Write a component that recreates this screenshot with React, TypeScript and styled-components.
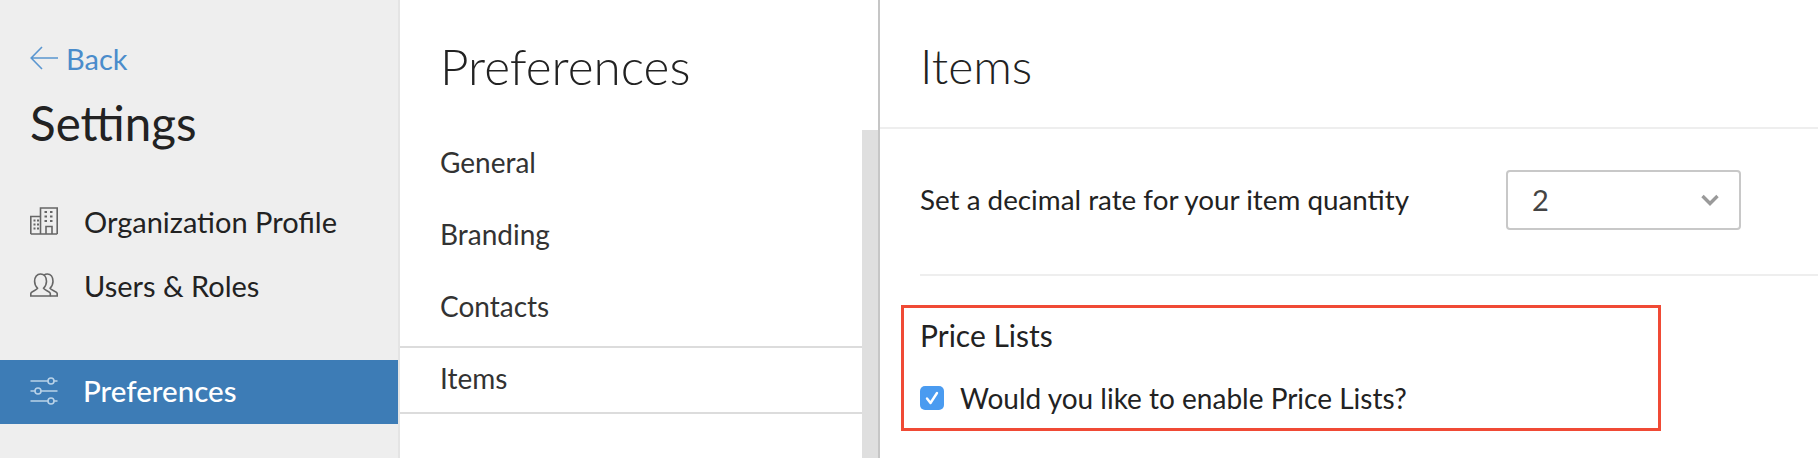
import React from 'react'
import styled, { createGlobalStyle } from 'styled-components'

const GlobalStyle = createGlobalStyle`
  html, body {
    margin: 0;
    padding: 0;
    background: #fff;
    overflow: hidden;
  }
  * {
    box-sizing: border-box;
  }
`

const Page = styled.div`
  display: flex;
  width: 1818px;
  height: 458px;
  overflow: hidden;
  font-family: Lato, 'Liberation Sans', sans-serif;
  color: #222;
`

const Sidebar = styled.aside`
  width: 400px;
  flex: none;
  background: #eeeeee;
  border-right: 2px solid #e4e4e4;
  padding-top: 40px;
`

const BackLink = styled.a`
  display: flex;
  align-items: center;
  gap: 8px;
  height: 36px;
  padding-left: 30px;
  font-size: 29px;
  color: #4a8ccb;
`

const SettingsTitle = styled.h1`
  margin: 17px 0 37px 30px;
  height: 60px;
  line-height: 60px;
  font-size: 47.5px;
  font-weight: 400;
  color: #222;
`

const SideItem = styled.div<{ $active?: boolean }>`
  display: flex;
  align-items: center;
  gap: ${(p) => (p.$active ? 25 : 26)}px;
  height: 64px;
  padding: 0 0 ${(p) => (p.$active ? 3 : 2)}px 30px;
  font-size: ${(p) => (p.$active ? 29.5 : 29)}px;
  color: ${(p) => (p.$active ? '#fff' : '#222')};
  background: ${(p) => (p.$active ? '#3d7cb6' : 'transparent')};
  font-weight: ${(p) => (p.$active ? 500 : 400)};
`

const SideGap = styled.div`
  height: 42px;
`

const Middle = styled.section`
  width: 480px;
  flex: none;
  display: flex;
  flex-direction: column;
  border-right: 2px solid #c6c6c6;
`

const MiddleHeader = styled.div`
  height: 130px;
  padding: 36px 0 0 40px;
`

const PanelTitle = styled.h2`
  margin: 0;
  height: 60px;
  line-height: 60px;
  font-size: 49.5px;
  font-weight: 300;
  color: #222;
`

const MiddleBody = styled.div`
  flex: 1;
  display: flex;
`

const PrefList = styled.div`
  flex: 1;
`

const PrefItem = styled.div<{ $active?: boolean }>`
  height: ${(p) => (p.$active ? 68 : 72)}px;
  display: flex;
  align-items: center;
  padding: 0 0 ${(p) => (p.$active ? 5 : 9)}px 40px;
  font-size: 28px;
  color: #333;
  border-top: ${(p) => (p.$active ? '2px solid #dcdcdc' : 'none')};
  border-bottom: ${(p) => (p.$active ? '2px solid #dcdcdc' : 'none')};
`

const ScrollTrack = styled.div`
  width: 16px;
  flex: none;
  background: #dfdfdf;
`

const Content = styled.main`
  flex: 1;
  min-width: 0;
`

const ContentHeader = styled.div`
  height: 129px;
  padding: 36px 0 0 40px;
  border-bottom: 2px solid #eeeeee;
`

const ContentTitle = styled.h2`
  margin: 0;
  height: 60px;
  line-height: 60px;
  font-size: 48px;
  font-weight: 300;
  color: #222;
`

const SettingRow = styled.div`
  display: flex;
  align-items: center;
  margin-left: 40px;
  height: 147px;
  padding-bottom: 4px;
  border-bottom: 2px solid #eeeeee;
`

const RowLabel = styled.span`
  width: 586px;
  font-size: 27.8px;
  color: #222;
`

const SelectBox = styled.div`
  width: 235px;
  height: 60px;
  display: flex;
  align-items: center;
  justify-content: space-between;
  padding: 0 20px 0 24px;
  border: 2px solid #c8c8c8;
  border-radius: 4px;
  font-size: 29px;
  color: #444;
`

const HighlightBox = styled.div`
  width: 760px;
  height: 126px;
  margin: 29px 0 0 21px;
  padding: 9px 0 0 16px;
  border: 3px solid #f04a35;
`

const SectionTitle = styled.div`
  height: 36px;
  line-height: 36px;
  font-size: 30px;
  color: #222;
`

const CheckRow = styled.label`
  display: flex;
  align-items: center;
  gap: 16px;
  margin-top: 27px;
  height: 36px;
  font-size: 28px;
  color: #222;
`

const CheckBox = styled.span`
  width: 24px;
  height: 24px;
  flex: none;
  display: flex;
  align-items: center;
  justify-content: center;
  border-radius: 5px;
  background: #4a9bf0;
`

const ArrowIcon = () => (
  <svg width="28" height="24" viewBox="0 0 28 24" fill="none" stroke="#5a96d0" strokeWidth="1.6">
    <path d="M28 12H1.5M12 1L1.2 12L12 23" />
  </svg>
)

const BuildingIcon = () => (
  <svg width="28" height="28" viewBox="0 0 28 28" fill="none" stroke="#666" strokeWidth="1.6">
    <path d="M.8 27V9.5h9.500M10.500 27V1h16.700v26M.8 27h26.400" />
    <path d="M16 27v-7.500h6V27" />
    <path d="M14.500 5h2.500M20 5h2.500M14.500 9.500h2.500M20 9.500h2.500M14.500 14h2.500M20 14h2.500M3.500 13.500h2M7 13.500h2M3.500 17.500h2M7 17.500h2M3.500 21.500h2M7 21.500h2" strokeWidth="2" />
  </svg>
)

const UsersIcon = () => (
  <svg width="28" height="24" viewBox="0 0 28 24" fill="none" stroke="#666" strokeWidth="1.6">
    <path d="M.8 23v-2.500c0-2 6-3.200 6.800-5.200-2-1.800-3-4-3-7C4.600 4 7 1 10.500 1s6 3 6 7.300c0 3-1 5.200-3 7 .8 2 6.800 3.200 6.800 5.200V23z" />
    <path d="M14 2.200C15 1.400 16 1 17.300 1c3.500 0 5.700 3 5.700 7.300 0 3-1 5.200-3 7 .8 2 7.200 3.200 7.200 5.200V23H20.500" />
  </svg>
)

const SlidersIcon = () => (
  <svg width="28" height="28" viewBox="0 0 28 28" fill="none" stroke="#b9d2e8" strokeWidth="1.6">
    <path d="M.5 4h17.500M24 4h3.500M.5 14h4.500M11 14h16.500M.5 24h17.500M24 24h3.500" />
    <circle cx="21" cy="4" r="3" />
    <circle cx="8" cy="14" r="3" />
    <circle cx="21" cy="24" r="3" />
  </svg>
)

const ChevronIcon = () => (
  <svg width="18" height="12" viewBox="0 0 18 12" fill="none" stroke="#9a9a9a" strokeWidth="3.4">
    <path d="M1.500 2L9 9.500L16.500 2" />
  </svg>
)

const CheckIcon = () => (
  <svg width="16" height="16" viewBox="0 0 16 16" fill="none" stroke="#fff" strokeWidth="2.4" strokeLinecap="round" strokeLinejoin="round">
    <path d="M3 8.500L6.500 13L13 3" />
  </svg>
)

export default function App() {
  return (
    <Page>
      <GlobalStyle />
      <Sidebar>
        <BackLink>
          <ArrowIcon />
          Back
        </BackLink>
        <SettingsTitle>Settings</SettingsTitle>
        <SideItem>
          <BuildingIcon />
          Organization Profile
        </SideItem>
        <SideItem>
          <UsersIcon />
          Users &amp; Roles
        </SideItem>
        <SideGap />
        <SideItem $active>
          <SlidersIcon />
          Preferences
        </SideItem>
      </Sidebar>
      <Middle>
        <MiddleHeader>
          <PanelTitle>Preferences</PanelTitle>
        </MiddleHeader>
        <MiddleBody>
          <PrefList>
            <PrefItem>General</PrefItem>
            <PrefItem>Branding</PrefItem>
            <PrefItem>Contacts</PrefItem>
            <PrefItem $active>Items</PrefItem>
          </PrefList>
          <ScrollTrack />
        </MiddleBody>
      </Middle>
      <Content>
        <ContentHeader>
          <ContentTitle>Items</ContentTitle>
        </ContentHeader>
        <SettingRow>
          <RowLabel>Set a decimal rate for your item quantity</RowLabel>
          <SelectBox>
            2
            <ChevronIcon />
          </SelectBox>
        </SettingRow>
        <HighlightBox>
          <SectionTitle>Price Lists</SectionTitle>
          <CheckRow>
            <CheckBox>
              <CheckIcon />
            </CheckBox>
            Would you like to enable Price Lists?
          </CheckRow>
        </HighlightBox>
      </Content>
    </Page>
  )
}
